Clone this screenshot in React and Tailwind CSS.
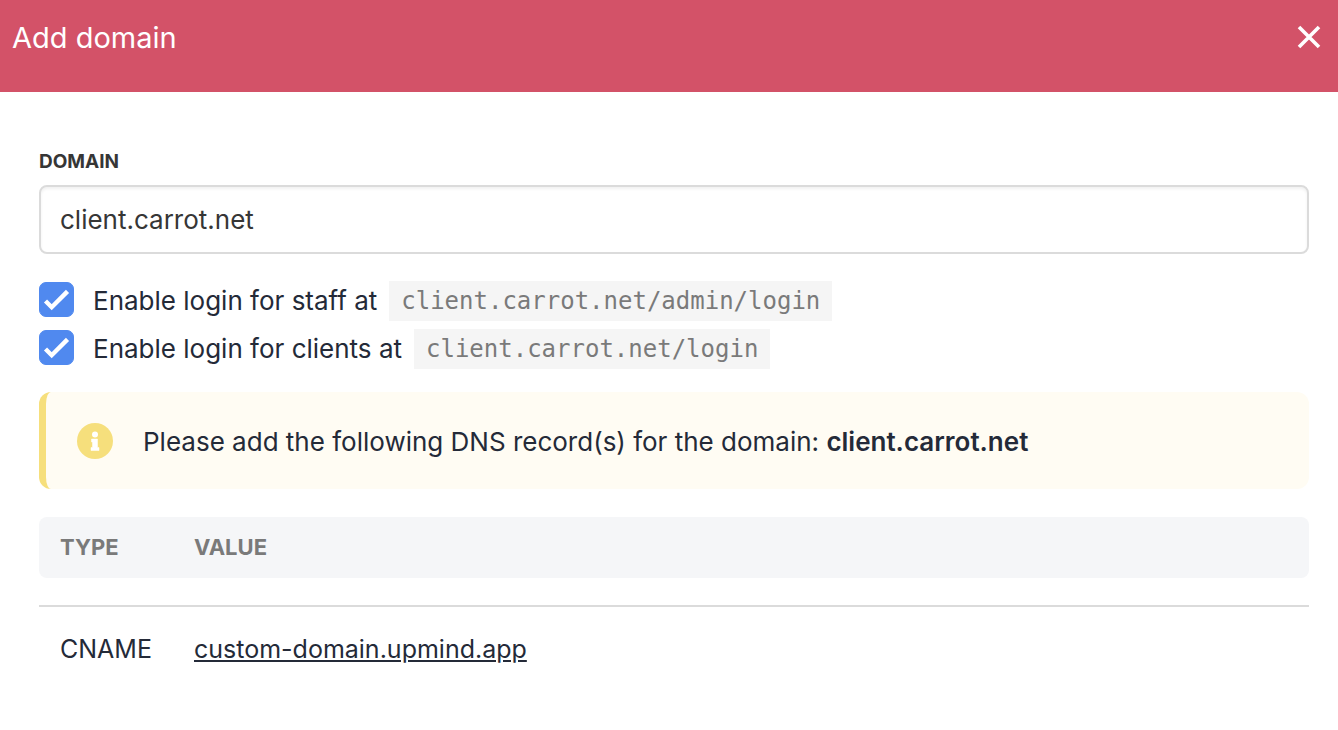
function CheckRow({ id, label, code }) {
  return (
    <div className="flex h-10 items-start">
      <span className="relative mt-px flex size-[35px] shrink-0">
        <input
          id={id}
          type="checkbox"
          defaultChecked
          className="peer size-[35px] appearance-none rounded-[7px] border border-gray-300 bg-white checked:border-[#5089ef] checked:bg-[#5089ef]"
        />
        <svg
          viewBox="0 0 35 35"
          className="pointer-events-none absolute inset-0 hidden size-full peer-checked:block"
          fill="none"
          stroke="#fff"
          strokeWidth="4.400"
          aria-hidden="true"
        >
          <path d="M6.5 19 L12.700 25.200 L28.500 9.400" />
        </svg>
      </span>
      <label htmlFor={id} className="ml-[19px] flex items-center gap-3 text-[26px] leading-10 whitespace-nowrap">
        {label}
        <code className="bg-[#f5f5f5] px-3 font-['DejaVu_Sans_Mono',monospace] text-[24px] leading-10 text-[#7a7a7a]">
          {code}
        </code>
      </label>
    </div>
  );
}

export default function App() {
  return (
    <div className="min-h-screen bg-white font-[Inter,sans-serif] text-[#242a38]">
      <header className="flex h-[92px] items-start justify-between bg-[#d35268] pt-4 pr-[17px] pl-3 text-white">
        <h1 className="text-[29px] leading-[44px]">Add domain</h1>
        <button type="button" aria-label="Close" className="mt-[9px] size-6">
          <svg viewBox="0 0 24 24" className="size-6" stroke="#fff" strokeWidth="3.6" aria-hidden="true">
            <path d="M2 2 L22 22 M22 2 L2 22" />
          </svg>
        </button>
      </header>

      <main className="pt-14 pr-[29px] pl-[39px]">
        <label htmlFor="domain" className="block text-[19px] leading-7 font-bold text-[#363636]">
          DOMAIN
        </label>
        <input
          id="domain"
          type="text"
          defaultValue="client.carrot.net"
          className="mt-[9px] block h-[69px] w-full rounded-lg border-2 border-[#dbdbdb] px-[19px] text-[26px] text-[#363636] shadow-[inset_0_2px_3px_rgba(10,10,10,0.06)]"
        />

        <div className="mt-[27px] flex flex-col gap-2">
          <CheckRow id="staff" label="Enable login for staff at" code="client.carrot.net/admin/login" />
          <CheckRow id="clients" label="Enable login for clients at" code="client.carrot.net/login" />
        </div>

        <div className="mt-[23px] flex h-[97px] items-center rounded-xl border-l-[7px] border-[#f6df7c] bg-[#fffcf3] pl-[31px] text-[26px]">
          <svg viewBox="0 0 36 36" className="size-9 shrink-0" aria-hidden="true">
            <circle cx="18" cy="18" r="18" fill="#f6df7c" />
            <circle cx="18" cy="11.500" r="3" fill="#fff" />
            <path d="M14.500 16h6v8.500h1.500v3h-8v-3h1.500v-5.500h-1z" fill="#fff" stroke="#fff" strokeWidth="0.5" strokeLinejoin="round" />
          </svg>
          <p className="ml-[30px] pt-0.5">
            Please add the following DNS record(s) for the domain: <strong className="font-semibold">client.carrot.net</strong>
          </p>
        </div>

        <table className="mt-7 w-full text-left">
          <thead>
            <tr className="h-[61px] text-[22px] text-[#7a7a7a]">
              <th className="w-[155px] rounded-l-lg bg-[#f5f6f8] pl-[21px] font-bold">TYPE</th>
              <th className="rounded-r-lg bg-[#f5f6f8] font-bold">VALUE</th>
            </tr>
          </thead>
          <tbody className="text-[25px]">
            <tr className="h-7" aria-hidden="true">
              <td colSpan="2" />
            </tr>
            <tr className="h-[86px] border-t-2 border-[#dbdbdb]">
              <td className="pl-[21px]">CNAME</td>
              <td>
                <a href="#record" className="underline">custom-domain.upmind.app</a>
              </td>
            </tr>
          </tbody>
        </table>
      </main>
    </div>
  );
}
